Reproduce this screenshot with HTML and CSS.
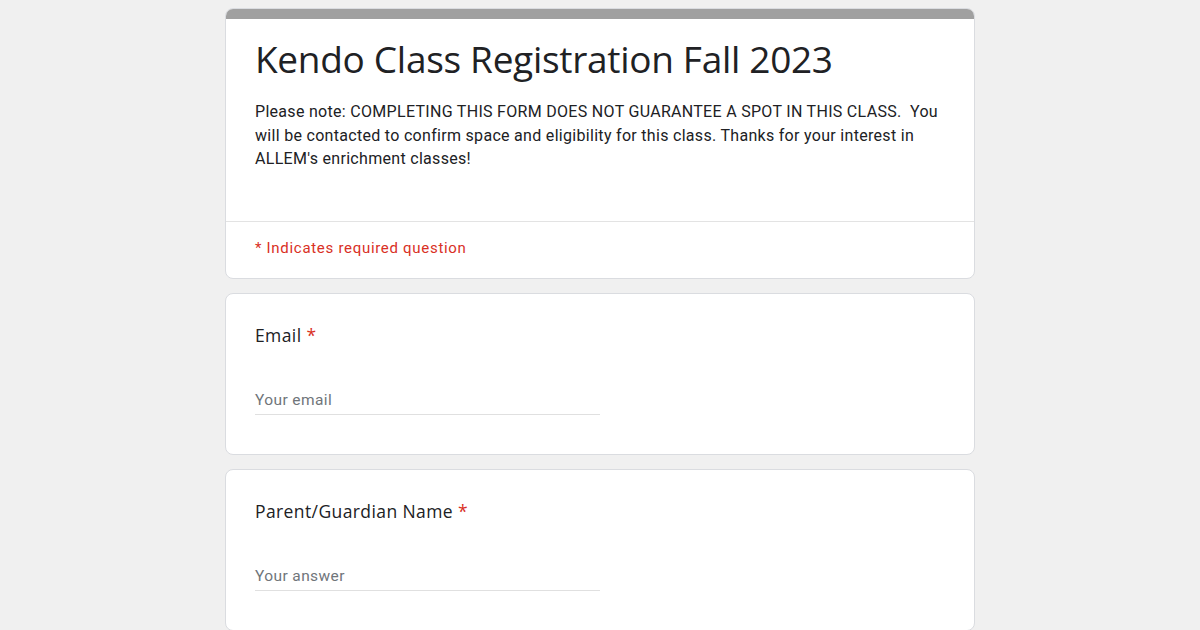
FILE: index.html
```html
<!DOCTYPE html>
<html lang="en">
<head>
  <meta charset="UTF-8">
  <title>Kendo Class Registration Fall 2023</title>
  <link rel="stylesheet" href="styles.css">
</head>
<body>
  <div class="form-wrap">
    <div class="card header-card">
      <div class="header-bar"></div>
      <div class="header-body">
        <h1 class="form-title">Kendo Class Registration Fall 2023</h1>
        <p class="form-desc">Please note: COMPLETING THIS FORM DOES NOT GUARANTEE A SPOT IN THIS CLASS.&nbsp; You will be contacted to confirm space and eligibility for this class. Thanks for your interest in ALLEM's enrichment classes!</p>
      </div>
      <div class="required-note">* Indicates required question</div>
    </div>

    <div class="card question">
      <div class="q-label">Email <span class="star">*</span></div>
      <div class="q-input">Your email</div>
    </div>

    <div class="card question">
      <div class="q-label">Parent/Guardian Name <span class="star">*</span></div>
      <div class="q-input">Your answer</div>
    </div>
  </div>
</body>
</html>
```

FILE: styles.css
```css
body {
  margin: 0;
  background: #f0f0f0;
  font-family: Roboto, "Liberation Sans", Arial, sans-serif;
  color: #202124;
}

.form-wrap {
  width: 750px;
  margin: 8px auto 0 auto;
  display: flex;
  flex-direction: column;
  gap: 14px;
}

.card {
  background: #fff;
  border: 1px solid #dadce0;
  border-radius: 8px;
  overflow: hidden;
}

.header-bar {
  height: 11px;
  background: #a0a0a0;
  margin: -1px -1px 0 -1px;
}

.header-body {
  padding: 14px 29px 50px 29px;
  border-bottom: 1px solid #e3e3e3;
}

.form-title {
  margin: 0;
  font-family: "Open Sans", Roboto, sans-serif;
  font-size: 37px;
  font-weight: 400;
  line-height: 52px;
  letter-spacing: -0.3px;
}

.form-desc {
  margin: 15px 0 0 0;
  font-size: 16px;
  line-height: 23.5px;
  letter-spacing: 0.3px;
}

.required-note {
  padding: 17px 29px 21px 29px;
  font-size: 15px;
  color: #d93025;
  letter-spacing: 0.7px;
}

.question {
  padding: 29px 29px 39px 29px;
}

.q-label {
  font-family: "Open Sans", Roboto, sans-serif;
  font-size: 17.5px;
  line-height: 24px;
  letter-spacing: 0.4px;
}

.star {
  color: #d93025;
}

.q-input {
  width: 345px;
  margin-top: 44px;
  padding-bottom: 5px;
  border-bottom: 1px solid #e0e0e0;
  font-size: 15.5px;
  color: #70757a;
  letter-spacing: 0.4px;
}
```
